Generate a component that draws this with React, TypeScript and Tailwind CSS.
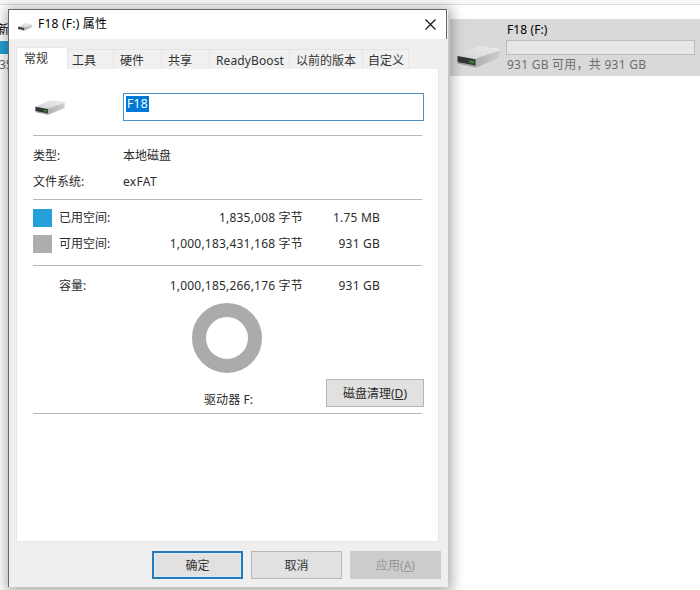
import React from "react";

function DriveIcon({ className }: { className: string }) {
  return (
    <svg className={className} viewBox="0 0 43 22" preserveAspectRatio="none">
      <defs>
        <linearGradient id="driveTop" x1="0" y1="1" x2="1" y2="0">
          <stop offset="0" stopColor="#d2d2d2" />
          <stop offset="1" stopColor="#ececec" />
        </linearGradient>
        <linearGradient id="driveSide" x1="0" y1="0" x2="1" y2="0">
          <stop offset="0" stopColor="#aeaeae" />
          <stop offset="1" stopColor="#cdcdcd" />
        </linearGradient>
      </defs>
      <path d="M0.5 10 L20 1 Q22 0.2 25 0.5 L41 2.5 Q42.5 3 42.5 5 L18.5 14 Z" fill="url(#driveTop)" />
      <path d="M18 13 L42.5 4.5 V10 Q42 12 40 13 L19 21.5 L17 21 Z" fill="url(#driveSide)" />
      <path d="M0.5 10 L18.5 13.2 V20 L2 16.8 Q0.5 16.5 0.5 15.5 Z" fill="#333634" />
      <path d="M0.5 16 L18.5 19.6 V21.6 L1.5 17.8 Q0.5 17.5 0.5 16 Z" fill="#9b9b9b" />
      <path d="M12 14.3 L17 15.2 V17.6 L12 16.6 Z" fill="#2f8a3e" />
    </svg>
  );
}

const tabs = [
  { label: "工具", box: "w-[46px] pl-1" },
  { label: "硬件", box: "w-12 pl-[6px]" },
  { label: "共享", box: "w-12 pl-[6px]" },
  { label: "ReadyBoost", box: "w-20 pl-[6px] tracking-[0.12px]" },
  { label: "以前的版本", box: "w-[73px] pl-[6px]" },
  { label: "自定义", box: "w-[46px] pl-[5px]" },
];

function Divider() {
  return <div className="h-px w-[389px] shrink-0 bg-[#b8b8bb]" />;
}

function SizeRow({ label, bytes, size, color }: { label: string; bytes: string; size: string; color?: string }) {
  return (
    <div className="flex h-[26px] items-center">
      <div className={`h-[18px] w-[19px] ${color ?? ""}`} />
      <span className="w-[91px] pl-[7px]">{label}</span>
      <span className="w-[160px] text-right tracking-[0.2px]">{bytes} 字节</span>
      <span className="w-[77px] text-right tracking-[0.2px]">{size}</span>
    </div>
  );
}

function Dialog() {
  return (
    <section className="absolute left-2 top-[9px] flex h-[578px] w-[440px] flex-col bg-[#efefef] shadow-[1px_2px_12px_3px_rgba(0,0,0,0.32)]">
      <header className="flex h-[30px] w-[439px] shrink-0 items-center border-l border-r border-t border-[#666] bg-white pl-[9px] pr-[10px] text-black">
        <DriveIcon className="mt-[5px] h-[8px] w-[14px]" />
        <span className="ml-[6px] flex-1 pb-px tracking-[0.22px]">F18 (F:) 属性</span>
        <svg className="h-[11px] w-[11px]" viewBox="0 0 11 11" stroke="#111" strokeWidth="1.1">
          <path d="M0.5 0.5 L10.5 10.5 M10.5 0.5 L0.5 10.5" />
        </svg>
      </header>

      <div className="flex flex-1 flex-col border-l border-[#666] pl-[7px] pt-2">
        <nav className="flex h-[22px] items-end">
          <button className="h-[22px] w-[52px] shrink-0 border border-b-0 border-[#e6e6e6] bg-white pl-[7px] text-left text-[#333]">
            常规
          </button>
          {tabs.map((tab) => (
            <div key={tab.label} className={`flex h-5 shrink-0 items-center border-r border-t border-[#e4e4e4] bg-[#f0f0f0] pt-[3px] text-[#333] ${tab.box}`}>
              {tab.label}
            </div>
          ))}
        </nav>

        <main className="flex h-[473px] w-[423px] flex-col border border-t-0 border-[#e6e6e6] bg-white pl-4 pt-6 text-[#2b2b2b]">
          <div className="flex h-[42px] shrink-0 items-start">
            <DriveIcon className="ml-[2px] mt-[7px] h-[15px] w-[30px]" />
            <div className="ml-[58px] h-7 w-[301px] border border-[#4d92c4] px-[2px] pt-[2px]">
              <span className="block h-4 w-[23px] bg-[#0078d7] pl-px leading-4 tracking-[0.3px] text-white">F18</span>
            </div>
          </div>
          <Divider />
          <dl className="grid h-[63px] shrink-0 grid-cols-[90px_1fr] grid-rows-[26px_26px] items-center pt-[7px]">
            <dt>类型:</dt>
            <dd>本地磁盘</dd>
            <dt>文件系统:</dt>
            <dd className="tracking-[0.3px]">exFAT</dd>
          </dl>
          <Divider />
          <div className="h-[65px] shrink-0 pt-[5px]">
            <SizeRow label="已用空间:" bytes="1,835,008" size="1.75 MB" color="bg-[#26a0da]" />
            <SizeRow label="可用空间:" bytes="1,000,183,431,168" size="931 GB" color="bg-[#adadad]" />
          </div>
          <Divider />
          <div className="h-[37px] shrink-0 pt-[7px]">
            <SizeRow label="容量:" bytes="1,000,185,266,176" size="931 GB" />
          </div>
          <div className="flex h-[110px] shrink-0">
            <div className="flex w-[293px] flex-col pl-[159px]">
              <div className="h-[70px] w-[70px] rounded-full border-[14px] border-[#ababab]" />
              <span className="mt-[18px] pl-[12px] tracking-[0.1px]">驱动器 F:</span>
            </div>
            <button className="mt-[76px] h-7 w-[98px] shrink-0 border border-[#b5b5b5] bg-[#e1e1e1] pt-[2px]">
              磁盘清理(<u>D</u>)
            </button>
          </div>
          <Divider />
        </main>

        <footer className="flex w-[425px] justify-end gap-2 pt-[9px] text-[#333]">
          <button className="h-7 w-[91px] border-2 border-[#2879b8] bg-[#e1e1e1] pt-[2px] shadow-[inset_0_0_0_1px_#d5edfc]">确定</button>
          <button className="h-7 w-[91px] border border-[#b7b7b7] bg-[#e1e1e1] pt-[2px]">取消</button>
          <button className="h-7 w-[91px] border border-[#cccccc] bg-[#cccccc] pt-[2px] text-[#969696]">应用(<u>A</u>)</button>
        </footer>
      </div>
    </section>
  );
}

export default function App() {
  return (
    <div className="relative h-[590px] w-[700px] overflow-hidden bg-white font-['Noto_Sans','Noto_Sans_CJK_SC',sans-serif] text-[12px] leading-[18px]">
      <div className="h-[5px] border-b border-[#dadada] bg-[#f8f8f8]" />
      <div className="flex justify-between pt-[14px]">
        <div className="w-[9px] whitespace-nowrap text-black">
          <div className="-ml-[3px] h-[21px] pt-[2px]">新</div>
          <div className="mt-px h-[13px] bg-[#26a0da]" />
          <div className="-ml-px pt-[2px] text-[#6d6d6d]">35</div>
        </div>
        <div className="flex h-[57px] w-[250px] bg-[#d9d9d9]">
          <DriveIcon className="ml-[7px] mt-[27px] h-[22px] w-[43px]" />
          <div className="ml-[6px] pt-[2px]">
            <div className="pl-px tracking-[0.1px] text-black">F18 (F:)</div>
            <div className="mt-px h-[15px] w-[189px] border border-[#bcbcbc] bg-[#e6e6e6]" />
            <div className="pl-px pt-px tracking-[0.25px] text-[#6d6d6d]">931 GB 可用，共 931 GB</div>
          </div>
        </div>
      </div>
      <Dialog />
    </div>
  );
}
